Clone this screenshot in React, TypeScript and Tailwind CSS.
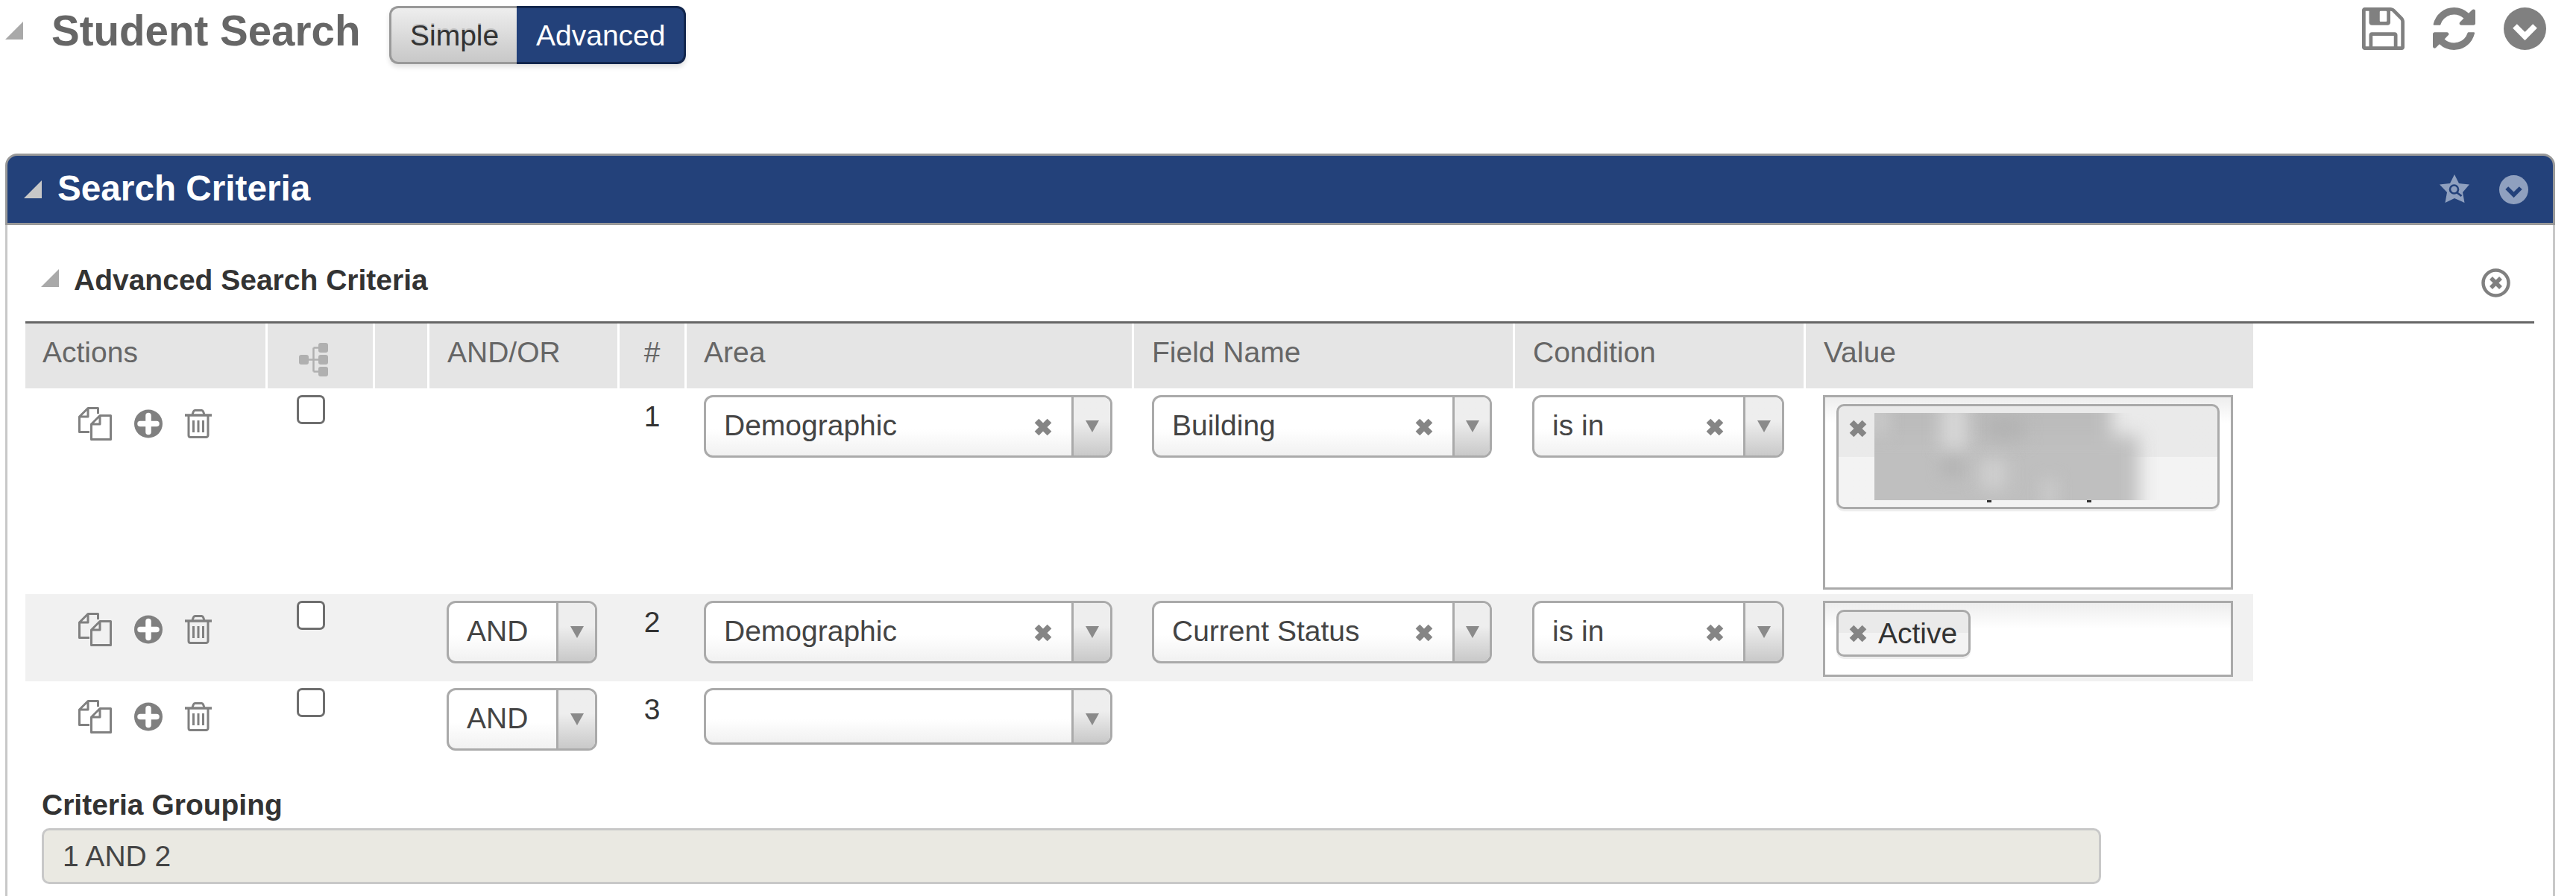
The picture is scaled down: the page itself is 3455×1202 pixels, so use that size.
import React from "react"

const GRID = "grid grid-cols-[325px_144px_73px_255px_90px_600px_511px_390px_600px] w-[2988px]"

function Triangle({ color = "#a9a9a9" }: { color?: string }) {
  return (
    <svg width="24" height="24" viewBox="0 0 24 24" className="shrink-0">
      <polygon points="24,0 24,24 0,24" fill={color} />
    </svg>
  )
}

function SaveIcon() {
  return (
    <svg width="57" height="57" viewBox="128 128 1536 1536" fill="#808080">
      <path d="M512 1536h768v-384h-768v384zm896 0h128v-896q0-14-10-38.5t-20-34.5l-281-281q-10-10-34-20t-39-10v416q0 40-28 68t-68 28h-576q-40 0-68-28t-28-68v-416h-128v1280h128v-416q0-40 28-68t68-28h832q40 0 68 28t28 68v416zm-384-928v-320q0-13-9.5-22.5t-22.5-9.5h-192q-13 0-22.5 9.5t-9.5 22.5v320q0 13 9.5 22.5t22.5 9.5h192q13 0 22.5-9.5t9.5-22.5zm640 32v928q0 40-28 68t-68 28h-1344q-40 0-68-28t-28-68v-1344q0-40 28-68t68-28h928q40 0 88 20t76 48l280 280q28 28 48 76t20 88z" />
    </svg>
  )
}

function RefreshIcon() {
  return (
    <svg width="57" height="57" viewBox="128 128 1536 1536" fill="#808080">
      <path d="M1639 1056q0 5-1 7-64 268-268 434.5t-478 166.5q-146 0-282.5-55t-243.5-157l-129 129q-19 19-45 19t-45-19-19-45v-448q0-26 19-45t45-19h448q26 0 45 19t19 45-19 45l-137 137q71 66 161 102t187 36q134 0 250-65t186-179q11-17 53-117 8-23 30-23h192q13 0 22.5 9.5t9.5 22.5zm25-800v448q0 26-19 45t-45 19h-448q-26 0-45-19t-19-45 19-45l138-138q-148-137-349-137-134 0-250 65t-186 179q-11 17-53 117-8 23-30 23h-199q-13 0-22.5-9.5t-9.5-22.5v-7q65-268 270-434.5t480-166.5q146 0 284 55.5t245 156.5l130-129q19-19 45-19t45 19 19 45z" />
    </svg>
  )
}

function ChevronCircle({ size, fill, stroke }: { size: number; fill: string; stroke: string }) {
  return (
    <svg width={size} height={size} viewBox="0 0 57 57">
      <circle cx="28.5" cy="28.5" r="28.5" fill={fill} />
      <path d="M15 25l13.5 13.5L42 25" fill="none" stroke={stroke} strokeWidth="8" strokeLinejoin="miter" />
    </svg>
  )
}

function StarSearch() {
  return (
    <svg width="40" height="40" viewBox="0 0 40 40">
      <polygon points="20,0 26,12 40,13.5 31,24 33.5,38 20,32 7.5,38 10,24 0,13.5 14,12" fill="#8fa0bf" />
      <circle cx="19.5" cy="20" r="5.5" fill="none" stroke="#23417a" strokeWidth="2.6" />
      <path d="M23.5 24.5l6 4.5" stroke="#23417a" strokeWidth="2.8" />
    </svg>
  )
}

function XCircle() {
  return (
    <svg width="39" height="39" viewBox="0 0 39 39">
      <circle cx="19.5" cy="19.5" r="17" fill="none" stroke="#808080" strokeWidth="4.5" />
      <path d="M13 13l13 13M26 13L13 26" stroke="#808080" strokeWidth="5.5" />
    </svg>
  )
}

function CopyIcon() {
  return (
    <svg width="45" height="45" viewBox="0 0 45 45" fill="none" stroke="#808080" strokeWidth="3" className="shrink-0">
      <path d="M26.5 9V1.5H13L1.5 13V33.5H15M13 1.5V13H1.5" strokeLinejoin="round" />
      <path d="M29 11.5H43.5V43.5H17.5V23ZM29 11.5V23H17.5" strokeLinejoin="round" />
    </svg>
  )
}

function PlusCircle() {
  return (
    <svg width="38" height="39" viewBox="0 0 38 39" className="shrink-0">
      <circle cx="19" cy="19.5" r="19" fill="#808080" />
      <path d="M19 8.5v22M8 19.5h22" stroke="#fff" strokeWidth="7.5" strokeLinecap="round" />
    </svg>
  )
}

function TrashIcon() {
  return (
    <svg width="36" height="39" viewBox="0 0 36 39" fill="none" stroke="#808080" className="shrink-0">
      <path d="M0 8h36" strokeWidth="3.5" />
      <path d="M10 7l1.5-4a2.5 2.5 0 0 1 2.5-1.5h8a2.5 2.5 0 0 1 2.5 1.5L26 7" strokeWidth="3" />
      <path d="M5 9v26a2.5 2.5 0 0 0 2.5 2.5h21A2.5 2.5 0 0 0 31 35V9" strokeWidth="3" />
      <path d="M11.5 15v16M18 15v16M24.5 15v16" strokeWidth="3" />
    </svg>
  )
}

function TreeIcon() {
  return (
    <svg width="39" height="45" viewBox="0 0 39 45" fill="#b0b0b0" className="mt-[26px] ml-[42px]">
      <rect x="0" y="16" width="13" height="13" rx="3" />
      <rect x="26" y="0" width="13" height="13" rx="3" />
      <rect x="26" y="16" width="13" height="13" rx="3" />
      <rect x="26" y="32" width="13" height="13" rx="3" />
      <path d="M13 22.5h13M19.5 6.5v32M19.5 6.5h7M19.5 38.5h7" fill="none" stroke="#b0b0b0" strokeWidth="2.5" />
    </svg>
  )
}

function ClearX() {
  return (
    <svg width="24" height="24" viewBox="0 0 24 24" className="shrink-0">
      <path d="M3.5 3.5l17 17M20.5 3.5l-17 17" stroke="#858585" strokeWidth="8" />
    </svg>
  )
}

function Select({
  width,
  text,
  clear = false,
  height = "h-[84px]",
  arrow = "w-[52px]"
}: {
  width: string
  text?: string
  clear?: boolean
  height?: string
  arrow?: string
}) {
  return (
    <div className={`${width} ${height} flex shrink-0 overflow-hidden rounded-[12px] border-[3px] border-[#aaaaaa] bg-gradient-to-b from-white from-55% to-[#f1f1f1]`}>
      <div className="flex flex-1 items-center justify-between pl-[24px] pr-[26px] min-w-0">
        <span className="mb-[3px] text-[39px] leading-[45px] text-[#444444]">{text}</span>
        {clear && (
          <span className="mt-[2px]">
            <ClearX />
          </span>
        )}
      </div>
      <div className={`${arrow} flex shrink-0 justify-center border-l-[3px] border-[#aaaaaa] bg-gradient-to-b from-[#eeeeee] from-40% to-[#c9c9c9] pt-[31px]`}>
        <svg width="18" height="16" viewBox="0 0 18 16">
          <polygon points="0,0 18,0 9,16" fill="#8a8a8a" />
        </svg>
      </div>
    </div>
  )
}

function RowActions() {
  return (
    <div className="flex items-start pl-[71px] pt-[25px]">
      <CopyIcon />
      <span className="ml-[30px] mt-[3px]"><PlusCircle /></span>
      <span className="ml-[30px] mt-[3px]"><TrashIcon /></span>
    </div>
  )
}

function RowCheck() {
  return (
    <div className="pt-[9px] pl-[39px]">
      <div className="h-[39px] w-[38px] rounded-[7px] border-[3px] border-[#6e6e6e] bg-white" />
    </div>
  )
}

function RowNum({ n }: { n: number }) {
  return <div className="pr-[3px] pt-[15px] text-center text-[39px] leading-[45px] text-[#333333]">{n}</div>
}

function Chip({ children, width, height }: { children: React.ReactNode; width: string; height: string }) {
  return (
    <div className={`${width} ${height} relative mt-[9px] ml-[15px] overflow-hidden rounded-[10px] border-[3px] border-[#aaaaaa] bg-gradient-to-b from-[#eaeaea] from-50% to-[#f3f3f3] to-50% shadow-[0_3px_0_#eeeeee]`}>
      {children}
    </div>
  )
}

export default function App() {
  return (
    <div className="h-[1202px] w-[3455px] overflow-hidden bg-white font-['Liberation_Sans',Arial,sans-serif]">
      {/* Page title bar */}
      <div className="flex h-[206px] items-start pl-[7px] pr-[40px]">
        <div className="mt-[29px]">
          <Triangle />
        </div>
        <h1 className="ml-[38px] mt-[10px] w-[415px] text-[56.5px] font-bold leading-[64px] text-[#666666]">Student Search</h1>
        <div className="ml-[38px] mt-[8px] flex h-[78px] text-[39px] leading-[45px] shadow-[0_4px_6px_rgba(0,0,0,0.12)] rounded-[12px]">
          <div className="flex w-[171px] items-center rounded-l-[12px] border-[3px] border-r-0 border-[#999999] bg-gradient-to-b from-[#eeeeee] to-[#c8c8c8] pl-[25px] text-[#333333] [text-shadow:0_-2px_0_#c4c4c4]">
            Simple
          </div>
          <div className="flex w-[227px] items-center rounded-r-[12px] border-[3px] border-l-0 border-[#12264d] bg-[#23417a] pl-[26px] text-white">
            Advanced
          </div>
        </div>
        <div className="ml-auto mt-[10px] flex gap-[38px]">
          <SaveIcon />
          <RefreshIcon />
          <ChevronCircle size={57} fill="#808080" stroke="#ffffff" />
        </div>
      </div>

      {/* Search Criteria panel */}
      <div className="ml-[7px] h-[996px] w-[3420px]">
        <div className="flex h-[96px] items-center rounded-t-[16px] border-[3px] border-[#999999] bg-[#23417a] pl-[22px] pr-[33px]">
          <Triangle color="#c8c8c8" />
          <h2 className="ml-[21px] mb-[2px] text-[47.700px] font-bold leading-[56px] text-white">Search Criteria</h2>
          <div className="ml-auto flex items-center gap-[40px]">
            <StarSearch />
            <ChevronCircle size={39} fill="#8fa0bf" stroke="#23417a" />
          </div>
        </div>

        <div className="h-[900px] border-x-[3px] border-[#c8c8c8] pl-[24px]">
          <div className="flex h-[129px] w-[3365px] items-center pl-[21px] pr-[32px] pt-[18px]">
            <span className="-mt-[5px]"><Triangle /></span>
            <h3 className="ml-[20px] text-[39px] font-bold leading-[45px] text-[#333333]">Advanced Search Criteria</h3>
            <div className="ml-auto mt-[8px]">
              <XCircle />
            </div>
          </div>
          <div className="h-[3px] w-[3365px] bg-[#666666]" />

          {/* Criteria table */}
          <div className={`${GRID} h-[87px] bg-[#e5e5e5] text-[39px] leading-[45px] text-[#666666]`}>
            <div className="border-r-[3px] border-white pl-[23px] pt-[16px]">Actions</div>
            <div className="border-r-[3px] border-white"><TreeIcon /></div>
            <div className="border-r-[3px] border-white" />
            <div className="border-r-[3px] border-white pl-[24px] pt-[16px]">AND/OR</div>
            <div className="border-r-[3px] border-white pt-[16px] text-center">#</div>
            <div className="border-r-[3px] border-white pl-[23px] pt-[16px]">Area</div>
            <div className="border-r-[3px] border-white pl-[24px] pt-[16px]">Field Name</div>
            <div className="border-r-[3px] border-white pl-[24px] pt-[16px]">Condition</div>
            <div className="pl-[24px] pt-[16px]">Value</div>
          </div>

          {/* Row 1 */}
          <div className={`${GRID} h-[276px]`}>
            <RowActions />
            <RowCheck />
            <div />
            <div />
            <RowNum n={1} />
            <div className="pl-[23px] pt-[9px]"><Select width="w-[548px]" text="Demographic" clear /></div>
            <div className="pl-[24px] pt-[9px]"><Select width="w-[456px]" text="Building" clear arrow="w-[50px]" /></div>
            <div className="pl-[23px] pt-[9px]"><Select width="w-[338px]" text="is in" clear /></div>
            <div className="pl-[23px] pt-[9px]">
              <div className="h-[261px] w-[550px] overflow-hidden border-[3px] border-[#aaaaaa] bg-gradient-to-b from-[#eeeeee] to-white to-[35px]">
                <Chip width="w-[514px]" height="h-[141px]">
                  <div className="pl-[14px] pt-[18px]"><ClearX /></div>
                  {/* Redacted value, blurred in the source picture */}
                  <div className="absolute left-[48px] top-[9px] h-[117px] w-[381px] overflow-hidden">
                    <div className="absolute -left-[40px] -top-[40px] h-[140px] w-[358px] bg-[#bcbcbc] blur-[12px]" />
                    <div className="absolute -left-[40px] top-[30px] h-[120px] w-[395px] bg-[#bfbfbf] blur-[12px]" />
                    <div className="absolute -left-[10px] -top-[10px] h-[40px] w-[30px] bg-[#c8c8c8] blur-[10px]" />
                    <div className="absolute left-[90px] -top-[15px] h-[65px] w-[34px] bg-[#d8d8d8] blur-[12px]" />
                    <div className="absolute left-[142px] top-[62px] h-[40px] w-[34px] bg-[#d0d0d0] blur-[12px]" />
                    <div className="absolute left-[225px] top-[88px] h-[40px] w-[20px] bg-[#cacaca] blur-[10px]" />
                    <div className="absolute left-[150px] top-[5px] h-[30px] w-[50px] bg-[#b2b2b2] blur-[12px]" />
                    <div className="absolute left-[90px] top-[60px] h-[25px] w-[30px] bg-[#b4b4b4] blur-[10px]" />
                  </div>
                  <div className="absolute left-[199px] top-[126px] h-[3px] w-[6px] bg-[#333333]" />
                  <div className="absolute left-[333px] top-[126px] h-[3px] w-[6px] bg-[#333333]" />
                </Chip>
              </div>
            </div>
          </div>

          {/* Row 2 */}
          <div className={`${GRID} h-[117px] bg-[#f1f1f1]`}>
            <RowActions />
            <RowCheck />
            <div />
            <div className="pl-[23px] pt-[9px]"><Select width="w-[202px]" text="AND" /></div>
            <RowNum n={2} />
            <div className="pl-[23px] pt-[9px]"><Select width="w-[548px]" text="Demographic" clear /></div>
            <div className="pl-[24px] pt-[9px]"><Select width="w-[456px]" text="Current Status" clear arrow="w-[50px]" /></div>
            <div className="pl-[23px] pt-[9px]"><Select width="w-[338px]" text="is in" clear /></div>
            <div className="pl-[23px] pt-[9px]">
              <div className="h-[102px] w-[550px] overflow-hidden border-[3px] border-[#aaaaaa] bg-gradient-to-b from-[#eeeeee] to-white to-[35px]">
                <Chip width="w-[180px]" height="h-[63px]">
                  <div className="flex h-full items-center pl-[14px]">
                    <ClearX />
                    <span className="ml-[15px] text-[39px] leading-[45px] text-[#333333]">Active</span>
                  </div>
                </Chip>
              </div>
            </div>
          </div>

          {/* Row 3 */}
          <div className={`${GRID} h-[143px]`}>
            <RowActions />
            <RowCheck />
            <div />
            <div className="pl-[23px] pt-[9px]"><Select width="w-[202px]" text="AND" /></div>
            <RowNum n={3} />
            <div className="pl-[23px] pt-[9px]"><Select width="w-[548px]" height="h-[76px]" /></div>
            <div />
            <div />
            <div />
          </div>

          {/* Criteria grouping */}
          <div className="pl-[22px]">
            <label className="block text-[39px] font-bold leading-[45px] text-[#333333]">Criteria Grouping</label>
            <div className="mt-[9px] flex h-[75px] w-[2762px] items-center rounded-[10px] border-[3px] border-[#c8c8c8] bg-[#eae9e2] pl-[25px] text-[39px] leading-[45px] text-[#444444]">
              1 AND 2
            </div>
          </div>
        </div>
      </div>
    </div>
  )
}
